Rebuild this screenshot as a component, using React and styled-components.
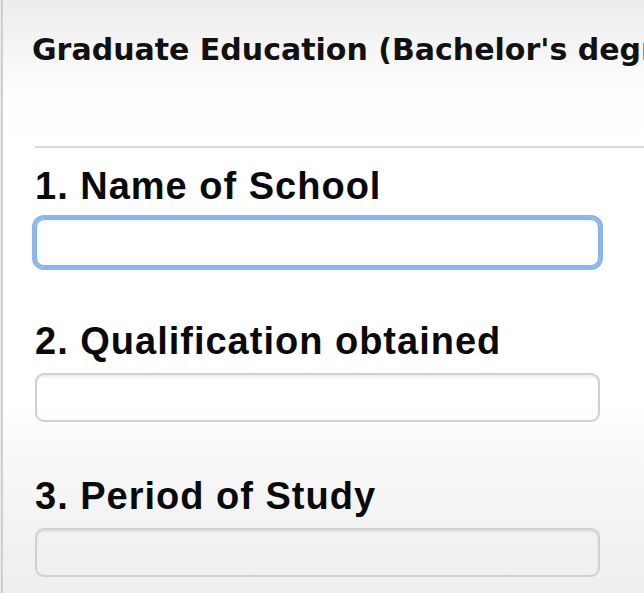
import React from "react";
import styled, { createGlobalStyle } from "styled-components";

const GlobalStyle = createGlobalStyle`
  html, body {
    margin: 0;
    padding: 0;
    background: #e9e9e9;
  }
  * {
    box-sizing: border-box;
  }
`;

const fields = [
  { id: "school", label: "1. Name of School", focused: true },
  { id: "qualification", label: "2. Qualification obtained" },
  { id: "period", label: "3. Period of Study" },
];

const App = () => {
  return (
    <>
      <GlobalStyle />
      <Page>
        <SectionTitle>Graduate Education (Bachelor's degree)</SectionTitle>
        <Rule />
        <FieldList>
          {fields.map((f) => (
            <Field key={f.id}>
              <Label htmlFor={f.id}>{f.label}</Label>
              <TextBox id={f.id} type="text" $focused={f.focused} />
            </Field>
          ))}
        </FieldList>
      </Page>
    </>
  );
};

export default App;

const Page = styled.div`
  margin-left: 1px;
  height: 100vh;
  overflow: hidden;
  border-left: 2px solid #d0d0d0;
  padding: 32px 0 0 29px;
  background: linear-gradient(
    to bottom,
    #ececec 0px,
    #fdfdfd 90px,
    #ffffff 160px,
    #ffffff 400px,
    #f6f6f6 480px,
    #eeeeee 593px
  );
  display: flex;
  flex-direction: column;
`;

const SectionTitle = styled.h2`
  margin: 0;
  font-family: "DejaVu Sans", Verdana, sans-serif;
  font-weight: bold;
  font-size: 30px;
  line-height: 35px;
  letter-spacing: 0;
  color: #111;
  white-space: nowrap;
`;

const Rule = styled.hr`
  margin: 79px 0 0 3px;
  border: 0;
  border-top: 2px solid #d8d8d8;
  width: 100%;
`;

const FieldList = styled.div`
  display: flex;
  flex-direction: column;
  gap: 52px;
  padding: 16px 0 0 3px;
`;

const Field = styled.div`
  display: flex;
  flex-direction: column;
  gap: 10px;
`;

const Label = styled.label`
  font-family: "Liberation Sans", Arial, sans-serif;
  font-weight: bold;
  font-size: 38px;
  line-height: 44px;
  letter-spacing: 1px;
  color: #0a0a0a;
`;

const TextBox = styled.input`
  width: 565px;
  height: 49px;
  border-radius: 9px;
  background: transparent;
  font-size: 20px;
  outline: none;
  border: ${(p) => (p.$focused ? "2px solid #89b2ee" : "2px solid #d0d0d0")};
  box-shadow: ${(p) =>
    p.$focused
      ? "0 0 0 3px #8cb4ef, inset 0 2px 3px rgba(0,0,0,0.06)"
      : "inset 0 2px 2px rgba(0,0,0,0.08)"};
`;
